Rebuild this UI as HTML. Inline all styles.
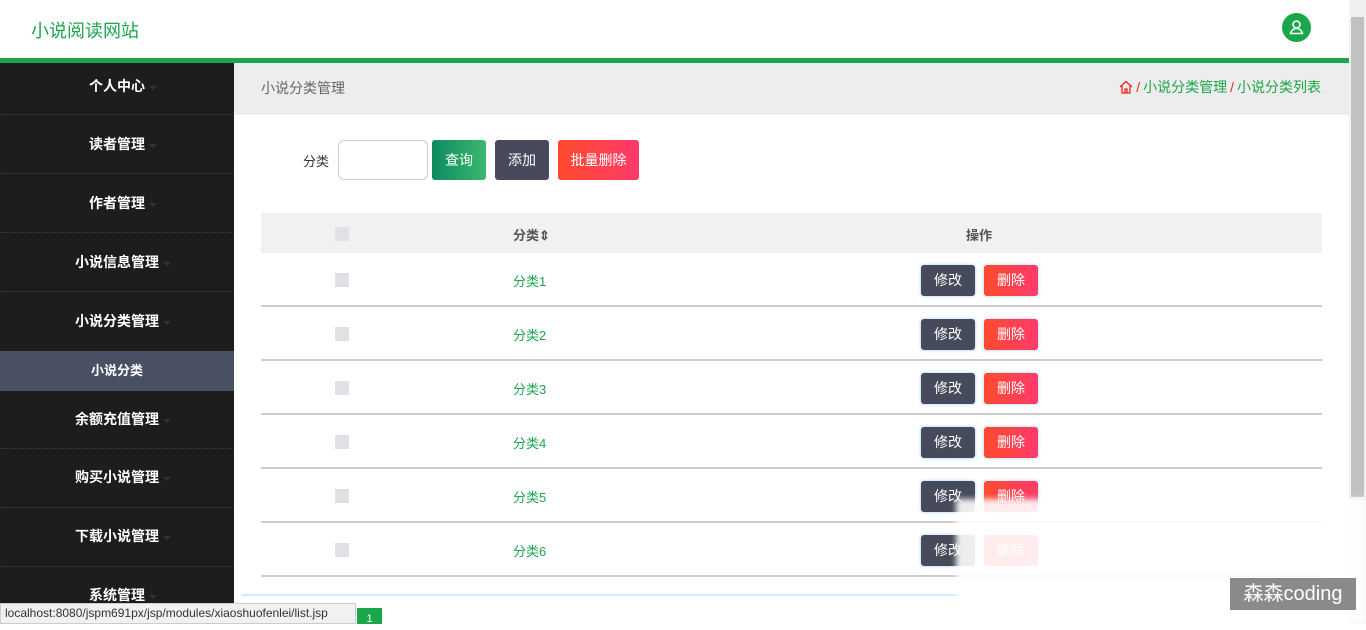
<!DOCTYPE html>
<html><head><meta charset="utf-8"><style>
*{box-sizing:border-box;margin:0;padding:0}
body{width:1366px;height:624px;overflow:hidden;font-family:"Liberation Sans","Noto Sans CJK SC",sans-serif;font-size:14px;background:#fff;position:relative}
.hdr{position:absolute;left:0;top:0;width:1349px;height:58px;background:#fff}
.logo{position:absolute;left:31px;top:17px;font-size:18px;color:#1aa64a}
.av{position:absolute;left:1282px;top:13px;width:29px;height:29px;border-radius:50%;background:#1aa64a}
.gb{position:absolute;left:0;top:58px;width:1349px;height:5px;background:#1aa64a}
.side{position:absolute;left:0;top:63px;width:234px;height:561px;background:#1d1d1d}
.it{position:absolute;left:0;width:234px;color:#fff;text-align:center;font-size:14px;font-weight:bold;border-bottom:1px dotted #3a3f4a}
.it span{position:relative}
.it span:after{content:"";position:absolute;right:-12px;top:8px;border:4px solid transparent;border-top-color:#333}
.sub{position:absolute;left:0;top:351px;width:234px;height:40px;background:#4a5064;color:#fff;text-align:center;line-height:40px;font-size:13px;font-weight:bold}
.bc{position:absolute;left:234px;top:63px;width:1115px;height:52px;background:#ededed}
.bc .t{position:absolute;left:27px;top:15px;color:#666;font-size:14px}
.bc .r{position:absolute;right:28px;top:14px;color:#1aa64a;font-size:14px}
.bc .r i{color:#e22;font-style:normal;margin:0 3px}
.lbl{position:absolute;left:303px;top:151px;font-size:13px;color:#333}
.inp{position:absolute;left:338px;top:140px;width:90px;height:40px;border:1px solid #ccc;border-radius:6px}
.btn{position:absolute;top:140px;height:40px;color:#fff;line-height:40px;text-align:center;border-radius:3px;font-size:14px}
.tbl{position:absolute;left:261px;top:213px;width:1061px}
.th{height:40px;background:#f1f1f1;position:relative;font-weight:bold;color:#555;font-size:13px}
.row{height:54px;border-bottom:2px solid #ccc;position:relative}
.cb{position:absolute;left:74px;width:14px;height:14px;background:#dfe1e5}
.cn{position:absolute;left:252px;color:#1aa64a;font-size:13px}
.b1,.b2{position:absolute;top:12px;height:31px;width:54px;color:#fff;line-height:31px;text-align:center;border-radius:3px;box-shadow:0 0 3px #9cf}
.b1{left:660px;background:#464a5a}
.b2{left:723px;background:linear-gradient(90deg,#ff4a2e,#ff3b6a)}
.sb{position:absolute;left:1349px;top:0;width:17px;height:624px;background:#f0f0f0}
.sb div{position:absolute;left:2px;top:17px;width:13px;height:480px;background:#c1c1c1}
</style></head><body>
<div class="hdr"><div class="logo">小说阅读网站</div>
<div class="av"><svg width="29" height="29" viewBox="0 0 29 29"><circle cx="14.5" cy="11.5" r="3.5" fill="none" stroke="#fff" stroke-width="1.6"/><path d="M8.5 20.5h12c-1-3.5-3-5-6-5s-5 1.5-6 5z" fill="none" stroke="#fff" stroke-width="1.6"/></svg></div></div>
<div class="gb"></div>
<div class="side">
<div class="it" style="top:0;height:52px;line-height:46px"><span>个人中心</span></div>
<div class="it" style="top:52px;height:59px;line-height:59px"><span>读者管理</span></div>
<div class="it" style="top:111px;height:59px;line-height:59px"><span>作者管理</span></div>
<div class="it" style="top:170px;height:59px;line-height:59px"><span>小说信息管理</span></div>
<div class="it" style="top:229px;height:59px;line-height:59px;border:0"><span>小说分类管理</span></div>
<div class="it" style="top:328px;height:58px;line-height:56px"><span>余额充值管理</span></div>
<div class="it" style="top:386px;height:59px;line-height:56px"><span>购买小说管理</span></div>
<div class="it" style="top:445px;height:59px;line-height:56px"><span>下载小说管理</span></div>
<div class="it" style="top:504px;height:59px;line-height:56px;border:0"><span>系统管理</span></div>
</div>
<div class="sub">小说分类</div>
<div class="bc"><div class="t">小说分类管理</div><div class="r"><svg width="14" height="14" viewBox="0 0 14 14" style="vertical-align:-2px"><path d="M1 7L7 1.5 13 7M3 6v7h8V6M6 13V9h2v4" fill="none" stroke="#e22" stroke-width="1.3"/></svg><i>/</i>小说分类管理<i>/</i>小说分类列表</div></div>
<div class="lbl">分类</div><div class="inp"></div>
<div class="btn" style="left:432px;width:54px;background:linear-gradient(90deg,#0c8a5e,#3cb771)">查询</div>
<div class="btn" style="left:495px;width:54px;background:#464a5a">添加</div>
<div class="btn" style="left:558px;width:81px;background:linear-gradient(90deg,#ff4a2e,#ff3b6a)">批量删除</div>
<div class="tbl">
<div class="th"><div class="cb" style="top:14px"></div><div style="position:absolute;left:252px;top:12px">分类⇕</div><div style="position:absolute;left:705px;top:12px">操作</div></div>
<div class="row"><div class="cb" style="top:20px"></div><div class="cn" style="top:18px">分类1</div><div class="b1">修改</div><div class="b2">删除</div></div>
<div class="row"><div class="cb" style="top:20px"></div><div class="cn" style="top:18px">分类2</div><div class="b1">修改</div><div class="b2">删除</div></div>
<div class="row"><div class="cb" style="top:20px"></div><div class="cn" style="top:18px">分类3</div><div class="b1">修改</div><div class="b2">删除</div></div>
<div class="row"><div class="cb" style="top:20px"></div><div class="cn" style="top:18px">分类4</div><div class="b1">修改</div><div class="b2">删除</div></div>
<div class="row"><div class="cb" style="top:20px"></div><div class="cn" style="top:18px">分类5</div><div class="b1">修改</div><div class="b2">删除</div></div>
<div class="row"><div class="cb" style="top:20px"></div><div class="cn" style="top:18px">分类6</div><div class="b1">修改</div><div class="b2">删除</div></div>
</div>
<div style="position:absolute;left:242px;top:594px;width:720px;height:30px;border-top:2px solid #d6e8ff"></div>
<div class="sb"><div></div></div>
<div style="position:absolute;left:956px;top:499px;width:410px;height:125px;background:rgba(255,255,255,0.9);filter:blur(3px)"></div>
<div style="position:absolute;left:1230px;top:578px;width:126px;height:32px;background:#8a8a8a;color:#fff;font-size:20px;line-height:32px;text-align:center">森森coding</div>
<div style="position:absolute;left:0;top:603px;width:356px;height:21px;background:#f1f1f1;border:1px solid #ccc;color:#333;font-size:12px;line-height:19px;padding-left:4px">localhost:8080/jspm691px/jsp/modules/xiaoshuofenlei/list.jsp</div>
<div style="position:absolute;left:357px;top:608px;width:25px;height:16px;background:#1aa64a;color:#fff;font-size:11px;text-align:center;line-height:22px">1</div>
</body></html>
